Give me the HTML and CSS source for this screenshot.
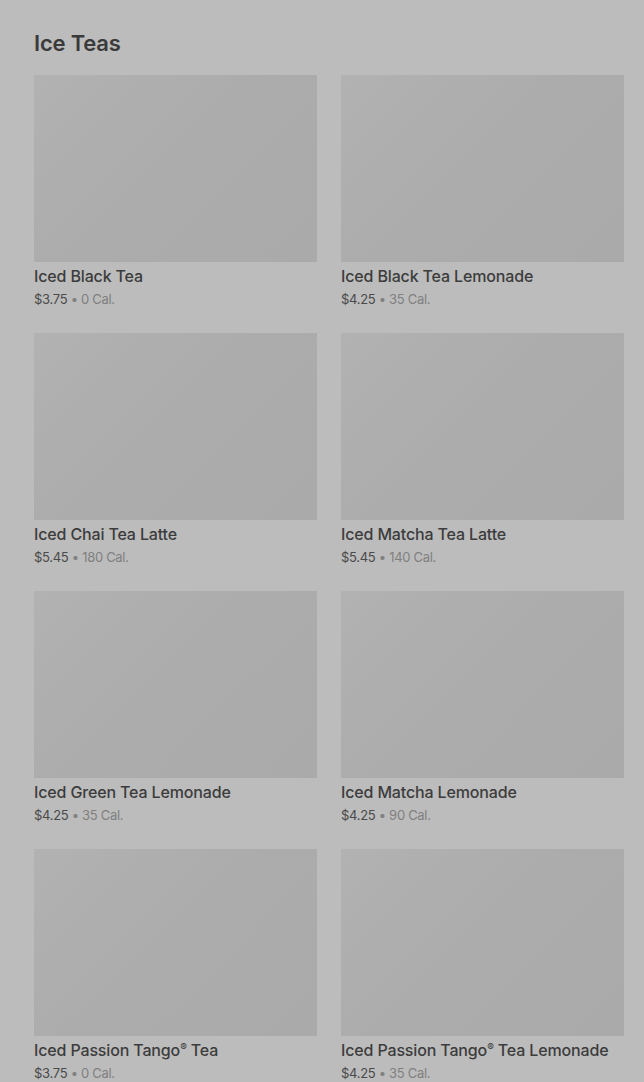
FILE: index.html
```html
<!DOCTYPE html>
<html>
<head>
<meta charset="utf-8">
<link rel="stylesheet" href="styles.css">
</head>
<body>
<main class="section">
  <h2 class="title">Ice Teas</h2>
  <div class="grid">
    <div class="card"><div class="thumb"></div><div class="name">Iced Black Tea</div><div class="meta"><span class="price">$3.75</span> • 0 Cal.</div></div>
    <div class="card"><div class="thumb"></div><div class="name">Iced Black Tea Lemonade</div><div class="meta"><span class="price">$4.25</span> • 35 Cal.</div></div>
    <div class="card"><div class="thumb"></div><div class="name">Iced Chai Tea Latte</div><div class="meta"><span class="price">$5.45</span> • 180 Cal.</div></div>
    <div class="card"><div class="thumb"></div><div class="name">Iced Matcha Tea Latte</div><div class="meta"><span class="price">$5.45</span> • 140 Cal.</div></div>
    <div class="card"><div class="thumb"></div><div class="name">Iced Green Tea Lemonade</div><div class="meta"><span class="price">$4.25</span> • 35 Cal.</div></div>
    <div class="card"><div class="thumb"></div><div class="name">Iced Matcha Lemonade</div><div class="meta"><span class="price">$4.25</span> • 90 Cal.</div></div>
    <div class="card"><div class="thumb"></div><div class="name">Iced Passion Tango<span class="reg">®</span> Tea</div><div class="meta"><span class="price">$3.75</span> • 0 Cal.</div></div>
    <div class="card"><div class="thumb"></div><div class="name">Iced Passion Tango<span class="reg">®</span> Tea Lemonade</div><div class="meta"><span class="price">$4.25</span> • 35 Cal.</div></div>
  </div>
</main>
</body>
</html>
```
FILE: styles.css
```css
html, body {
  margin: 0;
  padding: 0;
  background: #bcbcbc;
  font-family: Inter, "Noto Sans", sans-serif;
  overflow: hidden;
}
.section {
  padding: 28px 20px 0 34px;
}
.title {
  margin: 0 0 17px 0;
  font-size: 22px;
  line-height: 30px;
  font-weight: 600;
  color: #3a3a3a;
  letter-spacing: -0.2px;
}
.grid {
  display: grid;
  grid-template-columns: 283px 283px;
  column-gap: 24px;
  row-gap: 24px;
}
.card {
  display: flex;
  flex-direction: column;
}
.thumb {
  height: 187px;
  background: linear-gradient(135deg, #b2b2b2 0%, #acacac 45%, #aaaaaa 100%);
}
.name {
  margin-top: 4px;
  font-size: 16px;
  line-height: 20px;
  font-weight: 500;
  color: #3c3c3c;
  letter-spacing: -0.15px;
}
.reg {
  font-size: 10px;
  vertical-align: 5px;
  line-height: 0;
}
.meta {
  margin-top: 3px;
  font-size: 13px;
  line-height: 20px;
  color: #808080;
  letter-spacing: -0.3px;
}
.price {
  color: #4a4a4a;
}
```
